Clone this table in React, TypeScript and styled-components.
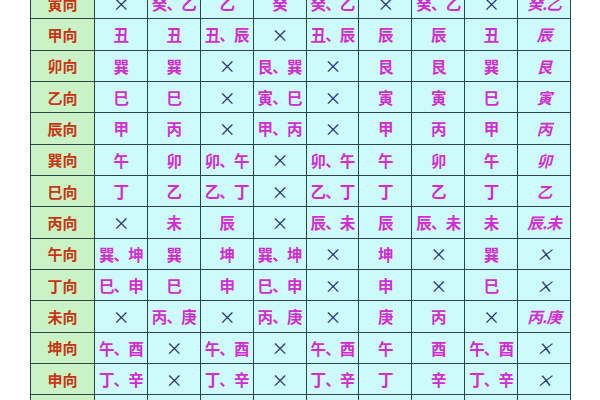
import React from 'react'
import styled, { createGlobalStyle } from 'styled-components'

const GlobalStyle = createGlobalStyle`
  html, body {
    margin: 0;
    padding: 0;
    background: #ffffff;
    overflow: hidden;
  }
`

const Page = styled.div`
  width: 600px;
  height: 400px;
  overflow: hidden;
  padding-left: 30px;
  box-sizing: border-box;
`

const Grid = styled.table`
  width: 540px;
  border-collapse: collapse;
  table-layout: fixed;
  margin-top: -13px;
  font-family: 'Noto Sans CJK SC', 'Noto Sans', sans-serif;
`

const HeadCol = styled.col`
  width: 64px;
`

const DataCol = styled.col`
  width: 52.9px;
`

const Row = styled.tr`
  height: 31.33px;
`

const HeadCell = styled.th`
  padding: 0;
  border: 1.5px solid #2a4646;
  background: #c9f3c4;
  color: #cc3212;
  font-size: 15px;
  font-weight: 700;
  text-align: center;
  vertical-align: middle;
`

const DataCell = styled.td<{ $cross: boolean; $last: boolean }>`
  padding: 0;
  border: 1.5px solid #2a4646;
  background: #cdfafa;
  color: ${(p) => (p.$cross ? '#1c2d6e' : '#d42ad2')};
  font-size: ${(p) => (p.$cross ? '17px' : '15.5px')};
  font-weight: ${(p) => (p.$cross ? 400 : 700)};
  font-style: ${(p) => (p.$last ? 'italic' : 'normal')};
  text-align: center;
  vertical-align: middle;
  white-space: nowrap;
  letter-spacing: -0.8px;
  overflow: hidden;
`

const X = '×'

const rows: [string, string[]][] = [
  ['寅向', [X, '癸、乙', '乙', '癸', '癸、乙', X, '癸、乙', X, '癸.乙']],
  ['甲向', ['丑', '丑', '丑、辰', X, '丑、辰', '辰', '辰', '丑', '辰']],
  ['卯向', ['巽', '巽', X, '艮、巽', X, '艮', '艮', '巽', '艮']],
  ['乙向', ['巳', '巳', X, '寅、巳', X, '寅', '寅', '巳', '寅']],
  ['辰向', ['甲', '丙', X, '甲、丙', X, '甲', '丙', '甲', '丙']],
  ['巽向', ['午', '卯', '卯、午', X, '卯、午', '午', '卯', '午', '卯']],
  ['巳向', ['丁', '乙', '乙、丁', X, '乙、丁', '丁', '乙', '丁', '乙']],
  ['丙向', [X, '未', '辰', X, '辰、未', '辰', '辰、未', '未', '辰.未']],
  ['午向', ['巽、坤', '巽', '坤', '巽、坤', X, '坤', X, '巽', X]],
  ['丁向', ['巳、申', '巳', '申', '巳、申', X, '申', X, '巳', X]],
  ['未向', [X, '丙、庚', X, '丙、庚', X, '庚', '丙', X, '丙.庚']],
  ['坤向', ['午、酉', X, '午、酉', X, '午、酉', '午', '酉', '午、酉', X]],
  ['申向', ['丁、辛', X, '丁、辛', X, '丁、辛', '丁', '辛', '丁、辛', X]],
  ['庚向', [X, '丁', X, '丁', X, '辛', '丁', X, '丁']],
]

export default function App() {
  return (
    <Page>
      <GlobalStyle />
      <Grid>
        <colgroup>
          <HeadCol />
          {Array.from({ length: 9 }, (_, i) => (
            <DataCol key={i} />
          ))}
        </colgroup>
        <tbody>
          {rows.map(([head, cells]) => (
            <Row key={head}>
              <HeadCell>{head}</HeadCell>
              {cells.map((c, i) => (
                <DataCell key={i} $cross={c === X} $last={i === cells.length - 1}>
                  {c}
                </DataCell>
              ))}
            </Row>
          ))}
        </tbody>
      </Grid>
    </Page>
  )
}
